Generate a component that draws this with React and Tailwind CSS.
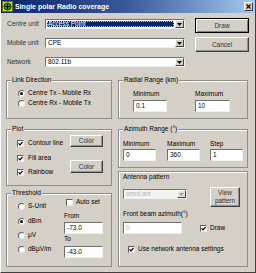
import React from "react";

const Radio = ({ checked }) => (
  <span className="w-[7px] h-[7px] rounded-full bg-white border border-t-[#606060] border-l-[#606060] border-r-[#e8e8e8] border-b-[#e8e8e8] flex items-center justify-center shrink-0">
    {checked && <span className="w-[3px] h-[3px] rounded-full bg-black"></span>}
  </span>
);

const Check = ({ checked }) => (
  <span className="w-[7px] h-[7px] bg-white border border-t-[#606060] border-l-[#606060] border-r-[#e8e8e8] border-b-[#e8e8e8] flex items-center justify-center shrink-0">
    {checked && (
      <svg width="5" height="5" viewBox="0 0 5 5">
        <path d="M0.5 2.3 L2 3.8 L4.5 1" stroke="#000" strokeWidth="1.2" fill="none" />
      </svg>
    )}
  </span>
);

const Field = ({ value, w, h = "h-[12px]", disabled }) => (
  <div className={`${w} ${h} bg-white border border-t-[#707070] border-l-[#707070] border-r-[#f0f0f0] border-b-[#f0f0f0] flex items-center pl-[2px] ${disabled ? "text-[#b0b0b0]" : ""}`}>
    {value}
  </div>
);

const Combo = ({ value, w, selected, disabled }) => (
  <div className={`${w} h-[10px] flex border border-t-[#707070] border-l-[#707070] border-r-[#f0f0f0] border-b-[#f0f0f0] ${disabled ? "bg-[#f4f3f1]" : "bg-white"}`}>
    <div className="flex-1 flex p-[1px]">
      <span className={`flex-1 flex items-center pl-[1px] ${selected ? "bg-[#0a246a] text-white outline-1 outline-dotted outline-[#c8c8c8] -outline-offset-1" : ""} ${disabled ? "text-[#b0b0b0]" : ""}`}>
        {value}
      </span>
    </div>
    <div className={`w-[9px] border border-t-white border-l-white border-r-[#404040] border-b-[#404040] flex items-center justify-center ${disabled ? "bg-[#e4e2dd]" : "bg-[#d4d0c8]"}`}>
      <svg width="5" height="3" viewBox="0 0 5 3">
        <path d="M0 0h5L2.5 3z" fill={disabled ? "#a0a0a0" : "#000"} />
      </svg>
    </div>
  </div>
);

const Btn = ({ children, className }) => (
  <div className={`bg-[#d4d0c8] border border-t-white border-l-white border-r-[#404040] border-b-[#404040] shadow-[inset_-1px_-1px_0_#909090] flex flex-col items-center justify-center text-[#303030] ${className}`}>
    {children}
  </div>
);

const Group = ({ title, className, children }) => (
  <div className={`border border-[#8c8c8c] shadow-[inset_1px_1px_0_#fff] ${className}`}>
    {title && (
      <span className="block w-fit -mt-[5px] ml-[4px] px-[1px] bg-[#d4d0c8] leading-[8px]">{title}</span>
    )}
    {children}
  </div>
);

export default function App() {
  return (
    <div className="w-[256px] h-[273px] bg-[#d4d0c8] border-l border-l-white border-r border-r-[#404040] border-b border-b-[#404040] flex flex-col overflow-hidden font-['Liberation_Sans',Arial,sans-serif] text-[6.5px] leading-[8px] text-black">
      {/* title bar */}
      <div className="h-[13px] bg-linear-to-r from-[#0a246a] via-[#3a5a9a] to-[#a6caf0] flex items-center pl-[1px]">
        <svg width="11" height="11" viewBox="0 0 11 11">
          <rect x="0.5" y="0.5" width="10" height="10" fill="#e8e000" stroke="#707000" />
          <circle cx="5.5" cy="5.5" r="3.6" fill="#20b020" stroke="#000" strokeWidth="0.8" />
          <path d="M5.5 3v5M3 5.5h5" stroke="#000" strokeWidth="1.2" />
        </svg>
        <span className="ml-[2px] text-white font-bold text-[7px]">Single polar Radio coverage</span>
        <div className="ml-auto mr-[2px] w-[9px] h-[9px] bg-[#d4d0c8] border border-t-white border-l-white border-r-[#404040] border-b-[#404040] flex items-center justify-center">
          <svg width="5" height="5" viewBox="0 0 5 5">
            <path d="M0.5 0.5L4.5 4.5M4.5 0.5L0.5 4.5" stroke="#000" strokeWidth="1.1" />
          </svg>
        </div>
      </div>

      {/* unit selectors */}
      <div className="flex pl-[6px] pt-[6px]">
        <div className="flex flex-col gap-[9px]">
          <div className="flex items-center h-[10px]">
            <span className="w-[38px] text-[#303030]">Centre unit</span>
            <Combo w="w-[140px]" value="Access Point" selected />
          </div>
          <div className="flex items-center h-[10px]">
            <span className="w-[38px] text-[#303030]">Mobile unit</span>
            <Combo w="w-[140px]" value="CPE" />
          </div>
          <div className="flex items-center h-[10px]">
            <span className="w-[38px] text-[#303030]">Network</span>
            <Combo w="w-[140px]" value="802.11b" />
          </div>
        </div>
        <div className="ml-[10px] -mt-[1px] flex flex-col gap-[4px]">
          <Btn className="w-[54px] h-[15px] border-black! shadow-[inset_1px_1px_0_#fff,inset_-1px_-1px_0_#808080]">Draw</Btn>
          <Btn className="w-[54px] h-[15px]">Cancel</Btn>
        </div>
      </div>

      {/* groups */}
      <div className="flex gap-[6px] pl-[5px] mt-[13px]">
        <div className="w-[106px] flex flex-col">
          <Group title="Link Direction" className="h-[39px]">
            <div className="pl-[11px] flex flex-col">
              <div className="flex items-center h-[8px] mt-[5px]">
                <Radio checked />
                <span className="ml-[3px]">Centre Tx - Mobile Rx</span>
              </div>
              <div className="flex items-center h-[8px] mt-[2px]">
                <Radio />
                <span className="ml-[3px]">Centre Rx - Mobile Tx</span>
              </div>
            </div>
          </Group>

          <Group title="Plot" className="h-[57px] mt-[10px]">
            <div className="flex">
              <div className="w-[63px] pl-[10px] flex flex-col">
                <div className="flex items-center h-[8px] mt-[6px]">
                  <Check checked />
                  <span className="ml-[4px]">Contour line</span>
                </div>
                <div className="flex items-center h-[8px] mt-[7px]">
                  <Check checked />
                  <span className="ml-[4px]">Fill area</span>
                </div>
                <div className="flex items-center h-[8px] mt-[6px]">
                  <Check checked />
                  <span className="ml-[4px]">Rainbow</span>
                </div>
              </div>
              <div className="flex flex-col">
                <Btn className="w-[33px] h-[12px] mt-[2px]">Color</Btn>
                <Btn className="w-[33px] h-[13px] mt-[13px]">Color</Btn>
              </div>
            </div>
          </Group>

          <Group title="Threshold" className="h-[74px] mt-[7px]">
            <div className="flex">
              <div className="w-[57px] pl-[11px] flex flex-col">
                <div className="flex items-center h-[8px] mt-[5px]">
                  <Radio />
                  <span className="ml-[3px]">S-Unit</span>
                </div>
                <div className="flex items-center h-[8px] mt-[7px]">
                  <Radio checked />
                  <span className="ml-[3px]">dBm</span>
                </div>
                <div className="flex items-center h-[8px] mt-[6px]">
                  <Radio />
                  <span className="ml-[3px]">µV</span>
                </div>
                <div className="flex items-center h-[8px] mt-[6px]">
                  <Radio />
                  <span className="ml-[3px]">dBµV/m</span>
                </div>
              </div>
              <div className="flex flex-col">
                <div className="flex items-center h-[8px] mt-[1px] pl-[2px]">
                  <Check />
                  <span className="ml-[3px]">Auto set</span>
                </div>
                <span className="mt-[6px]">From</span>
                <Field w="w-[39px]" value="-73.0" h="h-[12px] mt-[2px]" />
                <span className="mt-[1px]">To</span>
                <Field w="w-[39px]" value="-43.0" h="h-[12px] mt-[3px]" />
              </div>
            </div>
          </Group>
        </div>

        <div className="w-[130px] flex flex-col">
          <Group title="Radial Range (km)" className="h-[39px]">
            <div className="flex pl-[14px] mt-[6px]">
              <div className="flex flex-col w-[34px]">
                <span>Minimum</span>
                <Field w="w-[34px]" value="0.1" h="h-[12px] mt-[2px]" />
              </div>
              <div className="flex flex-col ml-[28px]">
                <span>Maximum</span>
                <Field w="w-[35px]" value="10" h="h-[12px] mt-[2px]" />
              </div>
            </div>
          </Group>

          <Group title="Azimuth Range (°)" className="h-[39px] mt-[10px]">
            <div className="flex pl-[4px] mt-[7px]">
              <div className="flex flex-col">
                <span>Minimum</span>
                <Field w="w-[33px]" value="0" h="h-[12px] mt-[1px]" />
              </div>
              <div className="flex flex-col ml-[11px]">
                <span>Maximum</span>
                <Field w="w-[33px]" value="360" h="h-[12px] mt-[1px]" />
              </div>
              <div className="flex flex-col ml-[10px]">
                <span>Step</span>
                <Field w="w-[33px]" value="1" h="h-[12px] mt-[1px]" />
              </div>
            </div>
          </Group>

          <Group className="h-[96px] mt-[3px]">
            <div className="flex flex-col pl-[4px]">
              <span className="mt-[1px]">Antenna pattern</span>
              <div className="flex mt-[6px]">
                <div className="mt-[2px]">
                  <Combo w="w-[64px]" value="omni.ant" disabled />
                </div>
                <Btn className="w-[30px] h-[20px] ml-[23px]">
                  <span>View</span>
                  <span>pattern</span>
                </Btn>
              </div>
              <span className="mt-[3px]">Front beam azimuth(°)</span>
              <div className="flex items-center mt-[4px]">
                <Field w="w-[59px]" value="0" disabled />
                <span className="ml-[18px] flex items-center">
                  <Check checked />
                  <span className="ml-[3px]">Draw</span>
                </span>
              </div>
              <div className="flex items-center h-[8px] mt-[11px] pl-[5px]">
                <Check checked />
                <span className="ml-[3px]">Use network antenna settings</span>
              </div>
            </div>
          </Group>
        </div>
      </div>
    </div>
  );
}
